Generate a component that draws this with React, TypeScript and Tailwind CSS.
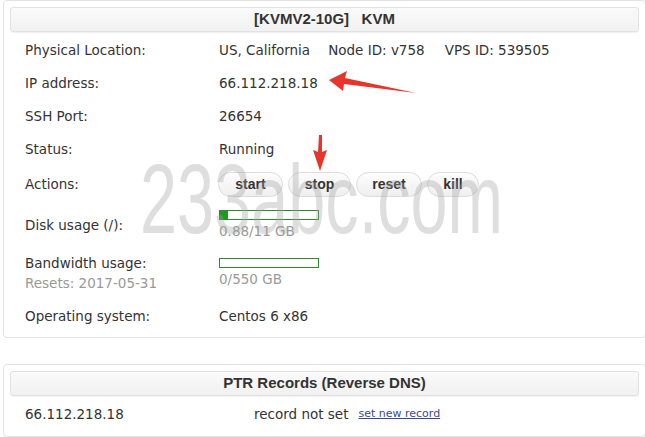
import React from 'react';

const font = { fontFamily: '"DejaVu Sans", Verdana, sans-serif' };
const boldFont = { fontFamily: '"Liberation Sans", Arial, sans-serif' };

function Header({ title }: { title: string }) {
  return (
    <div
      className="mx-[6px] flex h-[25px] items-center justify-center whitespace-pre rounded-[3px] border border-[#e2e2e2] bg-gradient-to-b from-[#fafafa] to-[#f1f1f1] text-[15px] font-bold text-[#333] shadow-[0_1px_1px_rgba(0,0,0,0.06)]"
      style={boldFont}
    >
      {title}
    </div>
  );
}

function Bar({ pct }: { pct: number }) {
  return (
    <div className="h-[10px] w-[100px] border border-[#2f8a2f] bg-white">
      <div className="h-full bg-[#1f9a1f]" style={{ width: `${pct}%` }} />
    </div>
  );
}

function Btn({ label, w }: { label: string; w: string }) {
  return (
    <div
      className={`flex h-[25px] items-center justify-center rounded-full border border-[#dcdcdc] bg-gradient-to-b from-[#fdfdfd] to-[#efefef] text-[14px] font-bold text-[#333] ${w}`}
      style={boldFont}
    >
      {label}
    </div>
  );
}

function Row({ label, children, h }: { label: React.ReactNode; children: React.ReactNode; h: string }) {
  return (
    <div className={`flex items-center ${h}`}>
      <div className="w-[194px] shrink-0">{label}</div>
      <div className="flex items-center">{children}</div>
    </div>
  );
}

export default function App() {
  return (
    <div className="relative h-[437px] w-[645px] overflow-hidden bg-white text-[13.5px] text-[#333]" style={font}>
      <div className="ml-[3px] w-[643px] rounded-[4px] border border-[#e3e3e3] pt-[6px] pb-[7px]">
        <Header title="[KVMV2-10G]   KVM" />
        <div className="mt-[2px] pl-[21px]">
          <Row label="Physical Location:" h="h-[33px]">
            <span>US, California</span>
            <span className="ml-[18px]">Node ID: v758</span>
            <span className="ml-[20px]">VPS ID: 539505</span>
          </Row>
          <Row label="IP address:" h="h-[33px]">
            <span>66.112.218.18</span>
          </Row>
          <Row label="SSH Port:" h="h-[33px]">
            <span>26654</span>
          </Row>
          <Row label="Status:" h="h-[33px]">
            <span>Running</span>
          </Row>
          <Row label="Actions:" h="h-[36px]">
            <div className="-ml-[1px] flex gap-[5px]">
              <Btn label="start" w="w-[65px]" />
              <Btn label="stop" w="w-[63px]" />
              <Btn label="reset" w="w-[66px]" />
              <Btn label="kill" w="w-[52px]" />
            </div>
          </Row>
          <div className="flex h-[46px] items-center">
            <div className="w-[194px] shrink-0">Disk usage (/):</div>
            <div className="flex flex-col">
              <Bar pct={8} />
              <span className="mt-[2px] leading-[18px] text-[#999]">0.88/11 GB</span>
            </div>
          </div>
          <div className="flex h-[54px] items-start">
            <div className="w-[194px] shrink-0 pt-[5px] leading-[20px]">
              <div>Bandwidth usage:</div>
              <div className="text-[#999]">Resets: 2017-05-31</div>
            </div>
            <div className="flex flex-col pt-[10px]">
              <Bar pct={0} />
              <span className="mt-[2px] leading-[18px] text-[#999]">0/550 GB</span>
            </div>
          </div>
          <Row label="Operating system:" h="h-[28px]">
            <span>Centos 6 x86</span>
          </Row>
        </div>
      </div>

      <div className="mt-[26px] ml-[3px] w-[643px] rounded-[4px] border border-[#e3e3e3] pt-[6px] pb-[4px]">
        <Header title="PTR Records (Reverse DNS)" />
        <div className="flex h-[36px] items-center pl-[21px]">
          <span className="w-[229px]">66.112.218.18</span>
          <span>record not set</span>
          <a className="ml-[10px] text-[11px] text-[#3b4a8a] underline">set new record</a>
        </div>
      </div>

      <div
        className="pointer-events-none absolute left-[140px] top-[150px] origin-left scale-x-[0.68] text-[98px] leading-none text-[rgba(160,160,160,0.35)]"
        style={{ fontFamily: '"Liberation Sans", Arial, sans-serif' }}
      >
        233abc.com
      </div>

      <svg className="pointer-events-none absolute left-0 top-0" width="645" height="437">
        <polygon points="329,80 347,71 345,78 416,93 344,84 343,91" fill="#e8352c" />
        <polygon points="319,135 322,135 322,152 327,150 320,171 313,150 318,152" fill="#e8352c" />
      </svg>
    </div>
  );
}
